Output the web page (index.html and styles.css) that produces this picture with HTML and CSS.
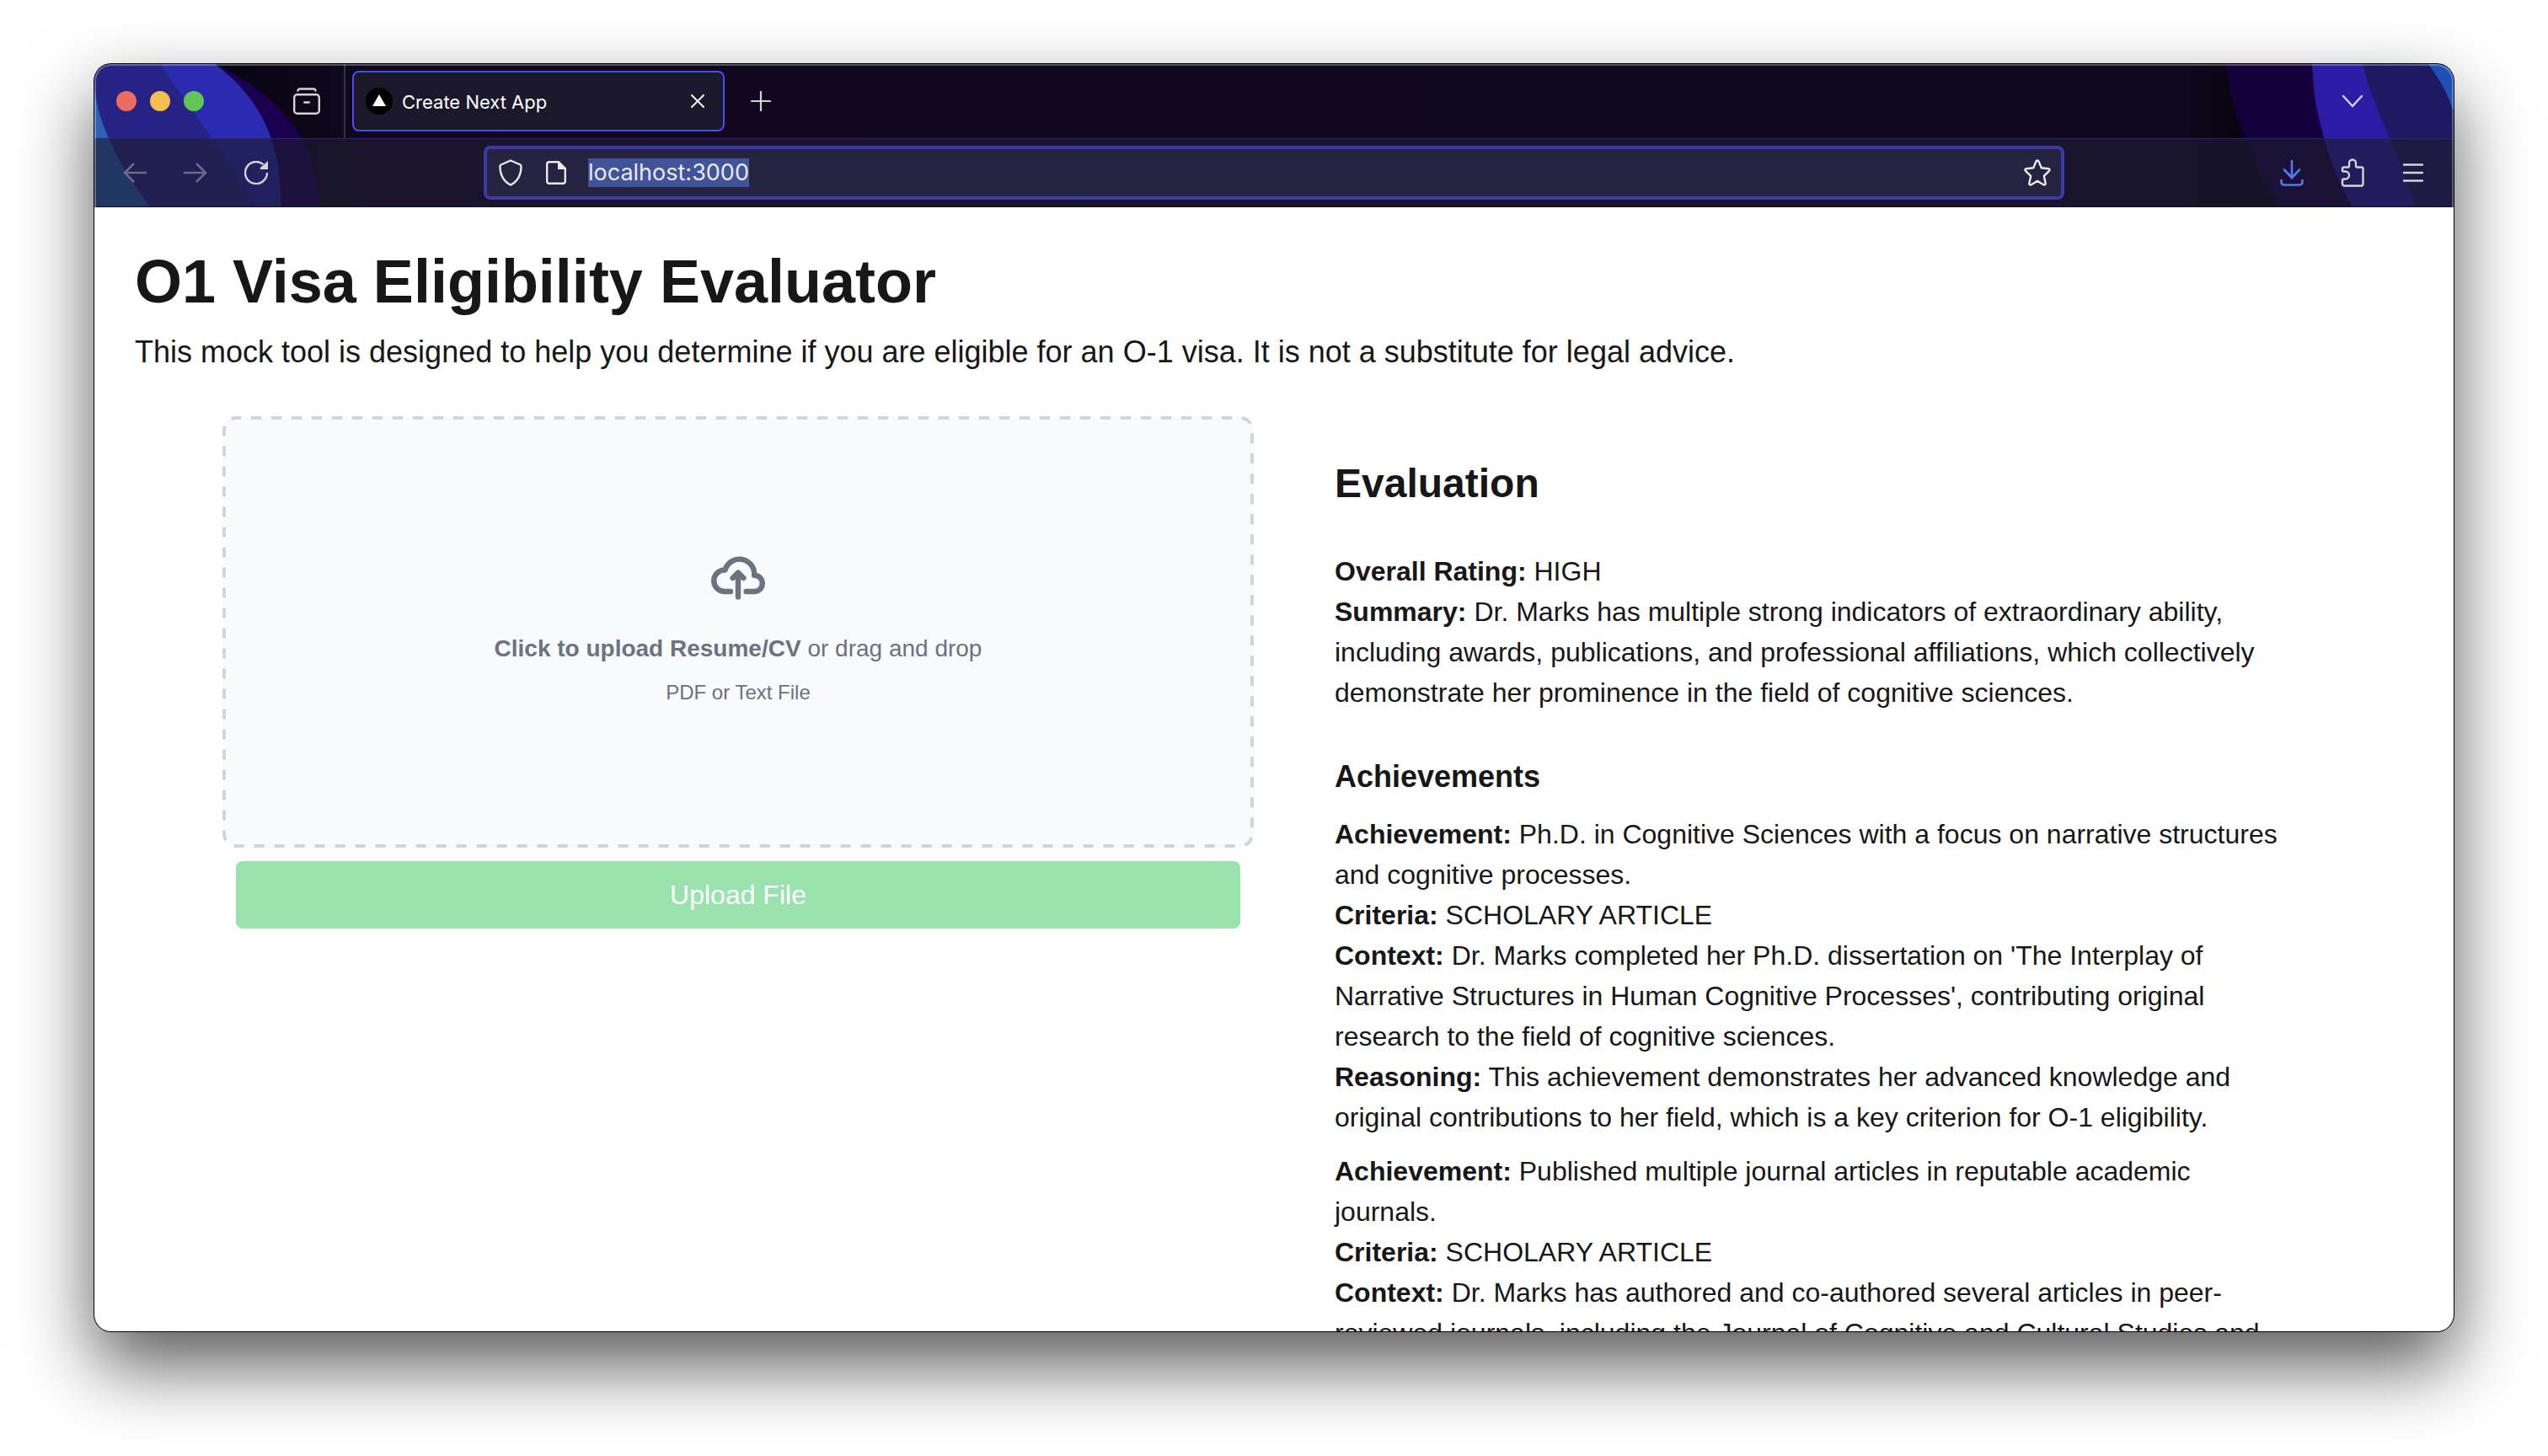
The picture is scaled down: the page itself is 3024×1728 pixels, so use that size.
FILE: index.html
```html
<!DOCTYPE html>
<html lang="en">
<head>
<meta charset="utf-8">
<title>Create Next App</title>
<link rel="stylesheet" href="styles.css">
</head>
<body>
<div class="window">
  <header class="chrome">
    <svg class="art art-left" viewBox="0 0 310 170" aria-hidden="true">
      <path fill="#1b0050" d="M143 0Q232 42 255 110Q264 138 268 170H0V0Z"/>
      <path fill="#2a2bae" d="M143 0Q214 52 220 140L222 170H0V0Z"/>
      <path fill="#262385" d="M78 0L139 88L192 170H0V0Z"/>
      <path fill="#2b63b5" d="M0 30Q4 60 17 88Q34 128 67 170H0Z"/>
    </svg>
    <svg class="art art-right" viewBox="0 0 310 170" aria-hidden="true">
      <path fill="#14003b" d="M40 0Q44 44 62 88Q77 130 103 170H310V0Z"/>
      <path fill="#2a1ca4" d="M142 0Q143 44 156 88Q168 132 190 170H310V0Z"/>
      <path fill="#1d1a62" d="M202 0Q210 34 234 88L266 170H310V0Z"/>
      <path fill="#1f50b8" d="M280 0Q300 26 310 56V0Z"/>
    </svg>
    <div class="tabs">
      <div class="lights"><span class="light red"></span><span class="light yellow"></span><span class="light green"></span></div>
      <button class="icon-btn list-btn" aria-label="Recent browsing">
        <svg width="32" height="32" viewBox="0 0 32 32" fill="none" stroke="currentColor" stroke-width="2.4" stroke-linecap="round"><path d="M5.500 3.500Q6 1.500 8 1.500H24Q26 1.500 26.500 3.500"/><rect x="1.200" y="8.200" width="29.600" height="22.600" rx="3.500"/><path d="M13.500 17.500H18.500" stroke-linecap="square"/></svg>
      </button>
      <div class="tab">
        <svg width="32" height="32" viewBox="0 0 32 32"><circle cx="16" cy="16" r="16" fill="#000"/><path fill="#fff" d="M16 8L24 22H8Z"/></svg>
        <span class="tab-title">Create Next App</span>
        <button class="tab-close" aria-label="Close tab"><svg width="16" height="16" viewBox="0 0 16 16" fill="none" stroke="currentColor" stroke-width="2" stroke-linecap="round"><path d="M1 1L15 15M15 1L1 15"/></svg></button>
      </div>
      <button class="icon-btn" aria-label="New tab"><svg width="24" height="24" viewBox="0 0 24 24" fill="none" stroke="currentColor" stroke-width="2.200" stroke-linecap="round"><path d="M12 1V23M1 12H23"/></svg></button>
      <button class="icon-btn all-tabs" aria-label="List all tabs"><svg width="24" height="16" viewBox="0 0 24 16" fill="none" stroke="currentColor" stroke-width="2.400" stroke-linecap="round"><path d="M1 2L12 14L23 2"/></svg></button>
    </div>
    <div class="toolbar">
      <div class="tools">
        <button class="icon-btn" aria-label="Back" disabled><svg width="28" height="28" viewBox="0 0 28 28" fill="none" stroke="currentColor" stroke-width="2.600"><path d="M28 14H2M13 3L2 14L13 25"/></svg></button>
        <button class="icon-btn" aria-label="Forward" disabled><svg width="28" height="28" viewBox="0 0 28 28" fill="none" stroke="currentColor" stroke-width="2.600"><path d="M0 14H26M15 3L26 14L15 25"/></svg></button>
        <button class="icon-btn" aria-label="Reload"><svg width="28" height="28" viewBox="0 0 28 28"><path d="M27 14A13 13 0 1 1 22.500 4.200" fill="none" stroke="currentColor" stroke-width="2.400"/><path d="M28 0V10H19.500Q18 9 19 8Z" fill="currentColor"/></svg></button>
      </div>
      <div class="urlbar">
        <button class="url-icon" aria-label="Tracking protection"><svg width="28" height="32" viewBox="0 0 28 32" fill="none" stroke="currentColor" stroke-width="2.400" stroke-linejoin="round"><path d="M14 1.500L25.500 6.500Q26.500 7 26.500 8.500Q26.500 24 14 30.500Q1.500 24 1.500 8.500Q1.500 7 2.500 6.500Z"/></svg></button>
        <button class="url-icon" aria-label="Site information"><svg width="24" height="28" viewBox="0 0 24 28"><path d="M15 1.200H4Q1.200 1.200 1.200 4V24Q1.200 26.800 4 26.800H20Q22.800 26.800 22.800 24V9Z" fill="none" stroke="currentColor" stroke-width="2.400"/><path d="M14 1V10H23.500L15.500 1Z" fill="currentColor"/></svg></button>
        <input class="url" type="text" aria-label="Address" value="localhost:3000">
        <button class="star" aria-label="Bookmark"><svg width="32" height="32" viewBox="0 0 32 32" fill="none" stroke="currentColor" stroke-width="2.400" stroke-linejoin="round"><path d="M14.500 2.500Q16 .500 17.500 2.500L20.800 10.300L29.300 11.200Q31.500 12 30 13.800L23.800 19.800L25.700 28.800Q25.500 31 23.300 30.200L16 25.800L8.700 30.200Q6.500 31 6.300 28.800L8.200 19.800L2 13.800Q.500 12 2.700 11.200L11.200 10.300Z"/></svg></button>
      </div>
      <div class="tools">
        <button class="icon-btn download" aria-label="Downloads"><svg width="28" height="32" viewBox="0 0 28 32" fill="none" stroke="currentColor" stroke-width="2.600" stroke-linecap="round"><path d="M14 2V21M5 12.500L14 22L23 12.500M1.500 25V27Q1.500 30.500 5 30.500H23Q26.500 30.500 26.500 27V25"/></svg></button>
        <button class="icon-btn" aria-label="Extensions"><svg width="28" height="34" viewBox="0 0 28 34" fill="none" stroke="currentColor" stroke-width="2.400" stroke-linejoin="round"><path d="M4 10.500H8.500Q10 10.500 10 9V5.500A4 4 0 0 1 18 5.500V9Q18 10.500 19.500 10.500H24.500Q26.500 10.500 26.500 12.500V30Q26.500 32.500 24.500 32.500H4Q2 32.500 2 30V26Q2 24.500 3.500 24.500H5.500A4.500 4.500 0 0 0 5.500 15.500H3.500Q2 15.500 2 14V12.500Q2 10.500 4 10.500Z"/></svg></button>
        <button class="icon-btn" aria-label="Menu"><svg width="26" height="22" viewBox="0 0 26 22" fill="none" stroke="currentColor" stroke-width="2.400" stroke-linecap="round"><path d="M2 1.500H24M2 11H24M2 20.500H24"/></svg></button>
      </div>
    </div>
  </header>

  <main class="page">
    <h1>O1 Visa Eligibility Evaluator</h1>
    <p class="lead">This mock tool is designed to help you determine if you are eligible for an O-1 visa. It is not a substitute for legal advice.</p>
    <div class="columns">
      <section class="upload">
        <label class="dropzone" for="resume">
          <svg class="dashes" aria-hidden="true"><rect x="2" y="2" rx="14"/></svg>
          <svg class="cloud" viewBox="0 0 20 16" fill="none" stroke="currentColor" stroke-width="2" stroke-linecap="round" stroke-linejoin="round" aria-hidden="true"><path d="M13 13h3a3 3 0 0 0 0-6h-.025A5.560 5.560 0 0 0 16 6.500 5.500 5.500 0 0 0 5.207 5.021C5.137 5.017 5.071 5 5 5a4 4 0 0 0 0 8h2.167M10 15V6m0 0L8 8m2-2 2 2"/></svg>
          <span class="hint"><strong>Click to upload Resume/CV</strong> or drag and drop</span>
          <span class="formats">PDF or Text File</span>
          <input class="file" id="resume" type="file">
        </label>
        <button class="submit" disabled>Upload File</button>
      </section>
      <section class="evaluation">
        <h2>Evaluation</h2>
        <div class="overall">
          <p><strong>Overall Rating:</strong> HIGH</p>
          <p><strong>Summary:</strong> Dr. Marks has multiple strong indicators of extraordinary ability, including awards, publications, and professional affiliations, which collectively demonstrate her prominence in the field of cognitive sciences.</p>
        </div>
        <h3>Achievements</h3>
        <ul class="achievements">
          <li>
            <p><strong>Achievement:</strong> Ph.D. in Cognitive Sciences with a focus on narrative structures and cognitive processes.</p>
            <p><strong>Criteria:</strong> SCHOLARY ARTICLE</p>
            <p><strong>Context:</strong> Dr. Marks completed her Ph.D. dissertation on 'The Interplay of Narrative Structures in Human Cognitive Processes', contributing original research to the field of cognitive sciences.</p>
            <p><strong>Reasoning:</strong> This achievement demonstrates her advanced knowledge and original contributions to her field, which is a key criterion for O-1 eligibility.</p>
          </li>
          <li>
            <p><strong>Achievement:</strong> Published multiple journal articles in reputable academic journals.</p>
            <p><strong>Criteria:</strong> SCHOLARY ARTICLE</p>
            <p><strong>Context:</strong> Dr. Marks has authored and co-authored several articles in peer-reviewed journals, including the Journal of Cognitive and Cultural Studies and</p>
          </li>
        </ul>
      </section>
    </div>
  </main>
</div>
</body>
</html>
```
FILE: styles.css
```css
* { box-sizing: border-box; margin: 0; }

body {
  display: flex;
  height: 100vh;
  padding: 76px 112px 148px;
  overflow: hidden;
  background: #fff;
  color: #171717;
  font: 32px/48px "Liberation Sans", Arial, sans-serif;
}

button, input { font: inherit; color: inherit; border: 0; background: none; padding: 0; }
svg { display: block; flex: none; }

.window {
  display: flex;
  flex-direction: column;
  flex: 1;
  min-width: 0;
  overflow: hidden;
  border-radius: 20px;
  background: #fff;
  box-shadow: 0 0 0 1px #000, 0 40px 88px rgba(0, 0, 0, .66);
}

/* Browser chrome */
.chrome {
  position: relative;
  flex: none;
  background: linear-gradient(90deg, #080510 150px, #110820 330px, #10081e calc(100% - 320px), #080510 calc(100% - 260px));
  color: #d4d4d6;
  font-family: Inter, sans-serif;
}
.chrome::after {
  content: "";
  position: absolute;
  inset: 0;
  border: solid rgba(255, 255, 255, .3);
  border-width: 2px 2px 0;
  border-radius: 20px 20px 0 0;
  pointer-events: none;
}
.art { position: absolute; top: 0; width: 310px; height: 170px; }
.art-left { left: 0; }
.art-right { right: 0; }

.tabs, .toolbar { position: relative; display: flex; align-items: center; }
.tabs { height: 88px; padding: 0 88px 0 26px; }
.lights { display: flex; gap: 16px; margin-right: 90px; }
.light { width: 24px; height: 24px; border-radius: 50%; }
.red { background: #ed6b5f; }
.yellow { background: #f5bf4f; }
.green { background: #62c655; }

.icon-btn { display: grid; place-items: center; width: 64px; height: 64px; }
.icon-btn:disabled { color: #6c6a87; }
.tabs .list-btn { width: 78px; height: 88px; padding-right: 12px; border-right: 2px solid #37323f; }

.tab {
  display: flex;
  align-items: center;
  gap: 11px;
  width: 442px;
  height: 72px;
  margin: 0 11px 0 8px;
  padding: 0 22px 0 14px;
  border: 2px solid #4b4bf2;
  border-radius: 8px;
  background: #1b182c;
  color: #fff;
  font-size: 22px;
}
.tab-title { flex: 1; padding-top: 2px; }
.tab-close { color: #f0f0f2; }
.all-tabs { margin-left: auto; }

.toolbar {
  height: 82px;
  padding: 0 16px;
  border-top: 1px solid #28256f;
  border-bottom: 1px solid #11101f;
  background: rgba(30, 28, 50, .63);
}
.tools { display: flex; gap: 8px; }
.download { color: #5478f5; }

.urlbar {
  display: flex;
  align-items: center;
  flex: 1;
  height: 64px;
  margin: 0 238px;
  padding: 0 12px 0 14px;
  border: 4px solid #3c39ab;
  border-radius: 8px;
  background: #252340;
  color: #eaeaee;
}
.url-icon { margin-right: 28px; }
.star { margin-left: auto; }
.url {
  field-sizing: content;
  height: 34px;
  margin-left: -2px;
  background: #415399;
  font-size: 27px;
  line-height: 34px;
}

/* Page */
.page { flex: 1; min-height: 0; padding: 48px; overflow: hidden; }
h1 { margin-bottom: 16px; font-size: 72px; line-height: 80px; }
.lead { margin-bottom: 48px; font-size: 36px; line-height: 56px; }

.columns {
  display: grid;
  grid-template-columns: 1fr 1fr;
  gap: 48px;
  max-width: 2496px;
  margin: 0 auto;
}

.dropzone {
  position: relative;
  display: flex;
  flex-direction: column;
  align-items: center;
  justify-content: center;
  height: 512px;
  padding: 40px 0 48px;
  border-radius: 16px;
  background: #f9fafc;
  color: #6b7280;
}
.dashes { position: absolute; inset: 0; width: 100%; height: 100%; }
.dashes rect {
  width: calc(100% - 4px);
  height: calc(100% - 4px);
  fill: none;
  stroke: #d1d5db;
  stroke-width: 4px;
  stroke-dasharray: 12px 12px;
  stroke-dashoffset: 6px;
}
.cloud { width: 64px; height: 64px; margin-bottom: 32px; }
.hint { margin-bottom: 16px; font-size: 28px; line-height: 40px; }
.formats { font-size: 24px; line-height: 32px; }
.file { position: absolute; inset: 0; opacity: 0; }

.submit {
  display: block;
  width: calc(100% - 32px);
  margin: 16px;
  padding: 16px;
  border-radius: 8px;
  background: #9ae2ae;
  color: #fff;
}

.evaluation { padding: 48px; }
h2 { margin-bottom: 48px; font-size: 48px; line-height: 64px; }
.overall { margin-bottom: 48px; }
h3 { margin-bottom: 16px; font-size: 36px; line-height: 56px; }
.achievements { display: grid; gap: 16px; padding: 0; list-style: none; }
```
